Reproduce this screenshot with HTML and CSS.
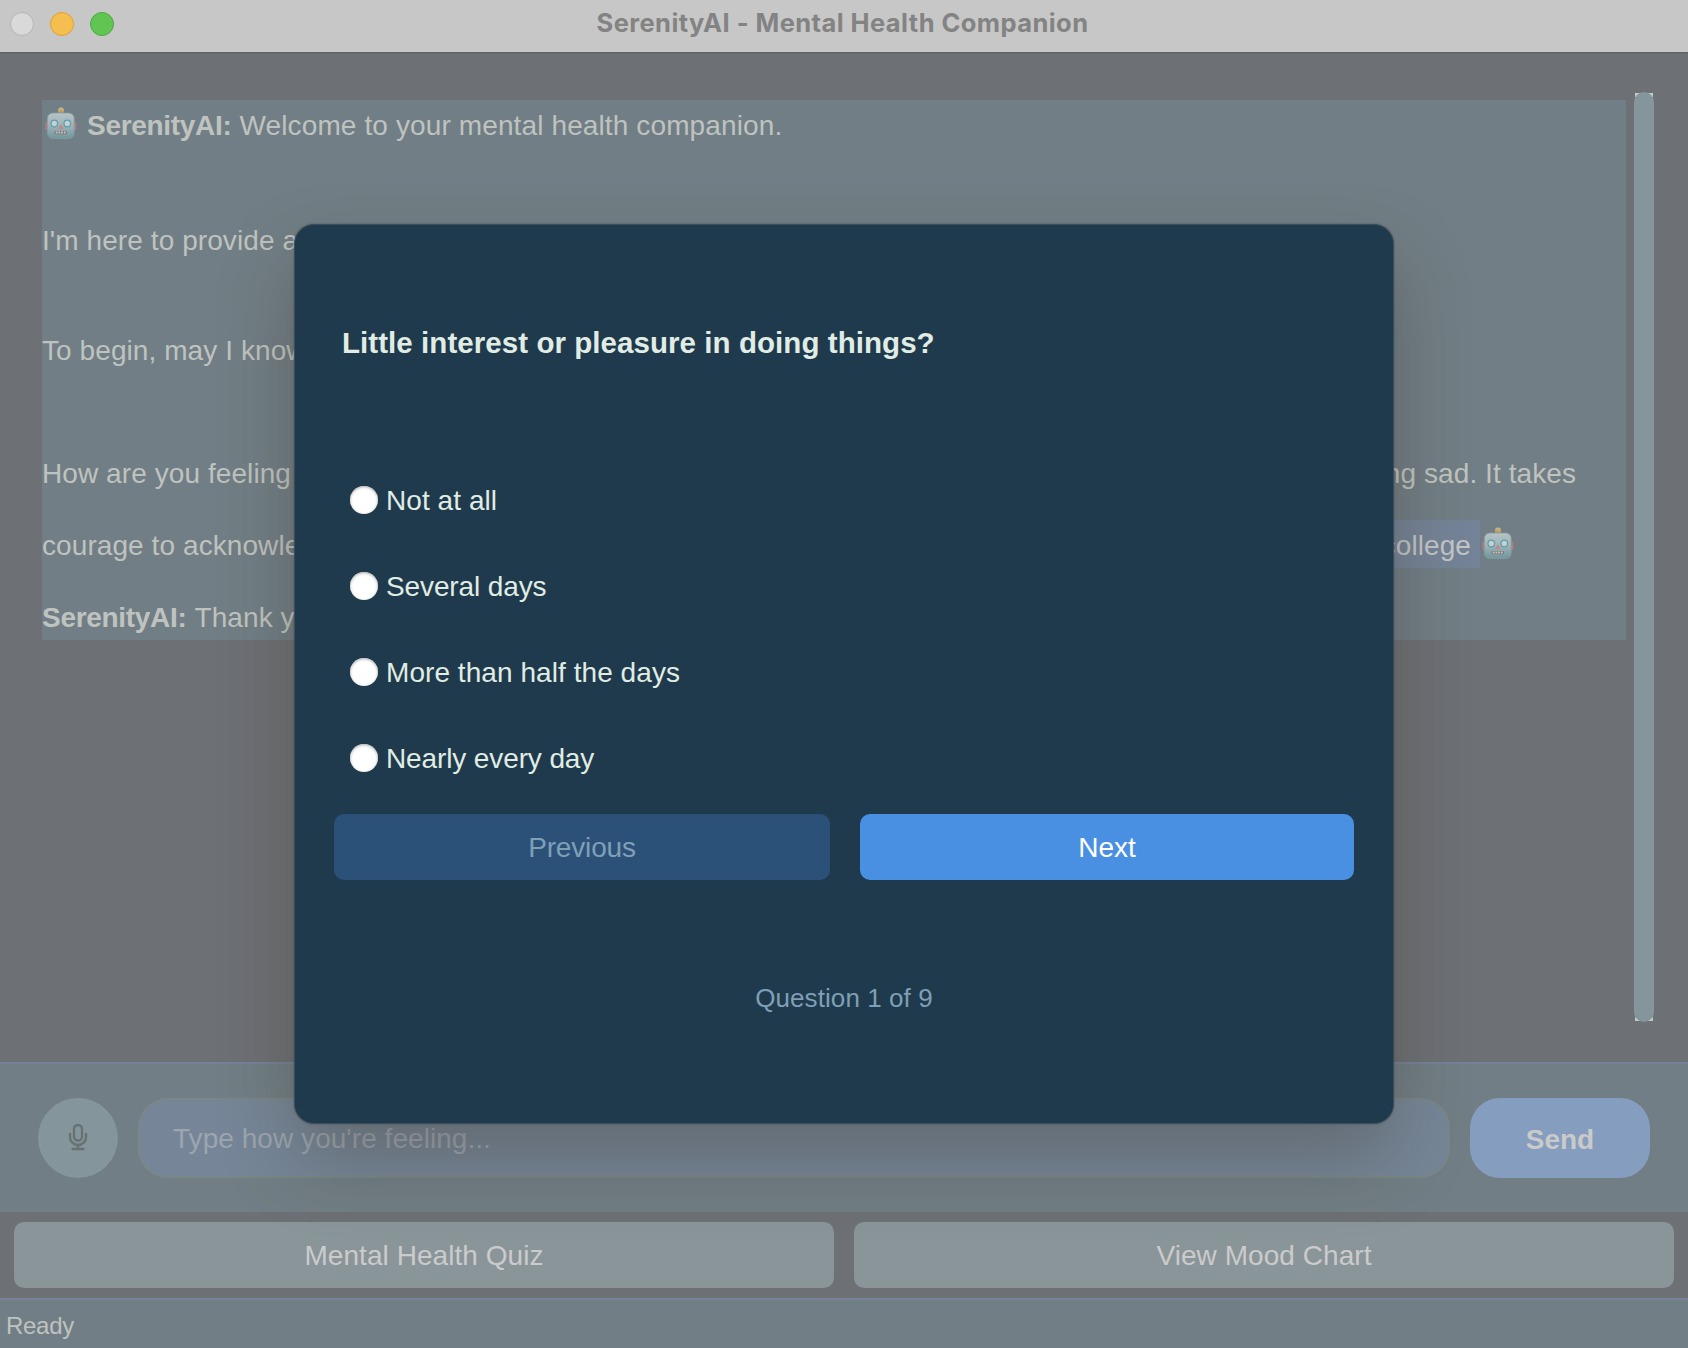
FILE: index.html
```html
<!DOCTYPE html>
<html lang="en">
<head>
<meta charset="utf-8">
<title>SerenityAI - Mental Health Companion</title>
<link rel="stylesheet" href="styles.css">
</head>
<body>
<svg class="defs" width="0" height="0" aria-hidden="true">
  <defs>
    <linearGradient id="face" x1="0" y1="0" x2="0" y2="1"><stop offset="0" stop-color="#b7c3c5"/><stop offset=".5" stop-color="#a0b2b6"/><stop offset="1" stop-color="#6f979e"/></linearGradient>
    <linearGradient id="knob" x1="0" y1="0" x2="0" y2="1"><stop offset="0" stop-color="#c9bd8e"/><stop offset=".5" stop-color="#c3a166"/><stop offset="1" stop-color="#8d7890"/></linearGradient>
    <symbol id="robot" viewBox="0 0 32 33">
      <rect x="13" y="0.4" width="6" height="7.6" rx="2.8" fill="url(#knob)"/>
      <rect x="0.4" y="14.5" width="4" height="9" rx="1.8" fill="#b17c7f"/>
      <rect x="27.4" y="14.5" width="4" height="9" rx="1.8" fill="#b17c7f"/>
      <rect x="2.400" y="6" width="26.8" height="25.500" rx="5.500" fill="url(#face)" stroke="#829fa5" stroke-width=".7"/>
      <circle cx="9.300" cy="16.500" r="3.300" fill="#c8cfd0" stroke="#58a2b1" stroke-width="1.300"/>
      <circle cx="22.300" cy="16.500" r="3.300" fill="#c8cfd0" stroke="#58a2b1" stroke-width="1.300"/>
      <path d="M15.900 17l2.600 4.800h-5.200z" fill="#c98583"/>
      <rect x="9.600" y="24" width="12.400" height="3.200" rx="1" fill="#7c7778"/>
      <path d="M10.800 25.600h10" stroke="#c4c6c2" stroke-width="2" stroke-dasharray="1.800 .9"/>
    </symbol>
  </defs>
</svg>
<div class="window">
  <header class="titlebar">
    <div class="lights"><i class="light light-off"></i><i class="light light-min"></i><i class="light light-max"></i></div>
    <h1 class="title">SerenityAI - Mental Health Companion</h1>
  </header>
  <main class="chat">
    <div class="log">
      <div class="line line-1"><svg class="robot robot-first"><use href="#robot"/></svg><b class="name">SerenityAI:</b><span class="welcome">Welcome to your mental health companion.</span></div>
      <div class="line line-2"><span>I'm here to provide a</span></div>
      <div class="line line-3"><span>To begin, may I know</span></div>
      <div class="line line-4"><span>How are you feeling</span><span>feeling sad. It takes</span></div>
      <div class="line line-5"><span>courage to acknowle</span><span class="tail"><mark class="picked">college</mark><svg class="robot"><use href="#robot"/></svg></span></div>
      <div class="line line-6"><b class="name">SerenityAI:</b><span>Thank you</span></div>
    </div>
    <div class="track"><div class="thumb"></div></div>
  </main>
  <section class="composer">
    <button class="mic" aria-label="Voice input"><svg width="20" height="28" viewBox="0 0 20 28" fill="none" stroke="#687071" stroke-width="2.300" stroke-linecap="round"><rect x="6" y="2" width="8" height="15.500" rx="4"/><path d="M2 11v3a8 8 0 0 0 16 0v-3M10 22v4M4.500 26h11"/></svg></button>
    <div class="field"><span>Type how you're feeling...</span></div>
    <button class="send">Send</button>
  </section>
  <nav class="actions">
    <button class="action">Mental Health Quiz</button>
    <button class="action">View Mood Chart</button>
  </nav>
  <footer class="status">Ready</footer>
</div>
<div class="dialog" role="dialog">
  <h2 class="question">Little interest or pleasure in doing things?</h2>
  <div class="options">
    <label class="option"><i class="radio"></i><span>Not at all</span></label>
    <label class="option"><i class="radio"></i><span class="tight">Several days</span></label>
    <label class="option"><i class="radio"></i><span>More than half the days</span></label>
    <label class="option"><i class="radio"></i><span class="tight">Nearly every day</span></label>
  </div>
  <div class="pager">
    <button class="previous" disabled>Previous</button>
    <button class="next">Next</button>
  </div>
  <p class="progress">Question 1 of 9</p>
</div>
</body>
</html>
```
FILE: styles.css
```css
* { box-sizing: border-box; }
body { margin: 0; background: #6d7075; font: 28px/32px "Liberation Sans", Arial, sans-serif; color: #bfc3bf; overflow: hidden; }
button { border: 0; padding: 0; font: inherit; color: inherit; }
h1, h2, p { margin: 0; }
.defs { position: absolute; }
.window { width: 1688px; height: 1348px; display: flex; flex-direction: column; }

.titlebar { height: 52px; flex: none; background: #c7c7c7; display: grid; grid-template-columns: 1fr auto 1fr; align-items: center; box-shadow: 0 1px 1px #5d6266; }
.lights { display: flex; gap: 16px; padding: 0 0 4px 10px; }
.light { width: 24px; height: 24px; border-radius: 50%; border: 1px solid; }
.light-off { background: #d9d9d9; border-color: #b5b5b5; }
.light-min { background: #f5bf4f; border-color: #dba03b; }
.light-max { background: #61c554; border-color: #4fa73f; }
.title { font: 700 25.5px/32px Inter, sans-serif; letter-spacing: .43px; color: #838383; padding: 0 3px 7px 0; white-space: nowrap; }

.chat { height: 1010px; flex: none; padding: 40px 34px 40px 42px; display: flex; gap: 8px; }
.log { width: 1584px; height: 540px; margin-top: 8px; background: #717e85; overflow: hidden; }
.line { height: 32px; display: flex; white-space: pre; letter-spacing: .08px; }
.line-1 { margin-top: 10px; }
.line-2 { margin-top: 83px; }
.line-3 { margin-top: 78px; }
.line-4 { margin-top: 91px; justify-content: space-between; padding-right: 50px; }
.line-5 { margin-top: 40px; justify-content: space-between; padding-right: 112px; }
.line-6 { margin-top: 40px; }
.robot { width: 32px; height: 33px; flex: none; }
.robot-first { margin: -3px 10px 0 3px; }
.name { letter-spacing: -.3px; margin-right: 8px; }
.welcome { letter-spacing: .12px; }
.tail { display: flex; gap: 2px; }
.tail .robot { margin-top: -3px; }
.picked { background: #748397; color: #c3c5c7; height: 48px; margin-top: -10px; padding: 10px 9px 0 8px; }
.track { width: 20px; height: 930px; background: linear-gradient(#c3c9cb, #c3c9cb) 50% 1px / 18px 4px no-repeat, linear-gradient(#c3c9cb, #c3c9cb) 50% 925px / 18px 4px no-repeat; }
.thumb { height: 100%; border-radius: 10px; background: #84959b; }

.composer { height: 150px; flex: none; border-top: 2px solid #748397; background: #717e85; display: flex; align-items: flex-start; gap: 20px; padding: 34px 38px 0; }
.mic { width: 80px; height: 80px; border-radius: 50%; background: #84959b; display: flex; align-items: center; justify-content: center; padding-bottom: 2px; }
.field { width: 1312px; height: 80px; border: 2px solid #7b8788; border-radius: 30px; background: #768698; color: #9ca5b0; padding: 23px 33px; letter-spacing: .05px; }
.send { width: 180px; height: 80px; border-radius: 30px; background: #859ebf; color: #cacaca; font-weight: 700; padding-top: 3px; }

.actions { height: 86px; flex: none; padding: 10px 14px; display: grid; grid-template-columns: 1fr 1fr; gap: 20px; }
.action { border-radius: 10px; background: #8a959a; color: #cbcbcb; padding-top: 2px; letter-spacing: .05px; }
.status { flex: 1; border-top: 2px solid #748397; background: #717e85; padding: 10px 6px; font-size: 24px; letter-spacing: -.3px; }

.dialog { position: absolute; left: 294px; top: 224px; width: 1100px; height: 900px; border-radius: 20px; background: #1e3a4c; border: 1px solid #3a4f5d; box-shadow: 0 0 2px rgba(50,50,50,.5), 0 36px 76px rgba(60,50,35,.32); padding: 100px 39px 0; color: #e0ece4; }
.question { font: 700 29.5px/36px "Liberation Sans", Arial, sans-serif; letter-spacing: .06px; padding-left: 8px; white-space: nowrap; }
.options { margin-top: 123px; padding-left: 16px; display: grid; gap: 54px; }
.option { height: 32px; display: flex; align-items: center; gap: 8px; }
.option span { padding-top: 1px; letter-spacing: .06px; }
.option .tight { letter-spacing: -.12px; }
.radio { width: 28px; height: 28px; border-radius: 50%; background: #fff; box-shadow: inset 0 1px 3px #aaa; }
.pager { margin-top: 40px; display: grid; grid-template-columns: 496px 494px; gap: 30px; }
.previous, .next { height: 66px; border-radius: 10px; padding-top: 2px; }
.previous { background: #2b5179; color: #7f9fb6; letter-spacing: -.15px; }
.next { background: #4a90e2; color: #fff; }
.progress { margin-top: 102px; text-align: center; font-size: 26px; letter-spacing: .08px; color: #7f9fb6; }
```
